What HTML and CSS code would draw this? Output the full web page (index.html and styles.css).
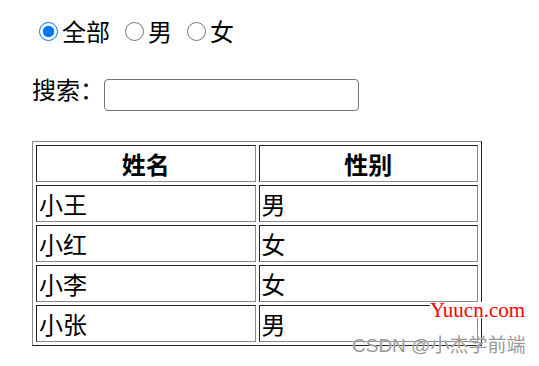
FILE: index.html
```html
<!DOCTYPE html>
<html lang="zh-CN">
<head>
  <meta charset="UTF-8" />
  <meta name="viewport" content="width=device-width, initial-scale=1.0">
  <title>筛选</title>
  <link rel="stylesheet" href="styles.css">
</head>
<body>
  <div class="page">
    <div class="filter">
      <label class="choice"><input type="radio" name="sex" value="all" checked>全部</label>
      <label class="choice"><input type="radio" name="sex" value="male">男</label>
      <label class="choice"><input type="radio" name="sex" value="female">女</label>
    </div>

    <div class="search">
      <span class="search-label">搜索：</span>
      <input type="text" class="search-input">
    </div>

    <table class="list">
      <thead>
        <tr>
          <th>姓名</th>
          <th>性别</th>
        </tr>
      </thead>
      <tbody>
        <tr><td>小王</td><td>男</td></tr>
        <tr><td>小红</td><td>女</td></tr>
        <tr><td>小李</td><td>女</td></tr>
        <tr><td>小张</td><td>男</td></tr>
      </tbody>
    </table>

    <span class="mark-site">Yuucn.com</span>
    <span class="mark-author">CSDN @小杰学前端</span>
  </div>
</body>
</html>
```

FILE: styles.css
```css
:root {
  --text-color: #000;
  --line-dark: #222;
  --line-light: #8a8a8a;
}

body {
  margin: 0;
  font-family: "Noto Sans CJK SC", "Liberation Sans", sans-serif;
  font-size: 24px;
  color: var(--text-color);
  background: #fff;
}

.page {
  position: relative;
  padding: 15px 0 0 32px;
  min-height: 351px;
}

.filter {
  display: flex;
  align-items: center;
  height: 32px;
  line-height: 32px;
}

.choice {
  display: inline-flex;
  align-items: center;
}

.choice + .choice {
  margin-left: 8px;
}

.choice input {
  width: 19px;
  height: 19px;
  margin: 0 4px 0 7px;
}

.search {
  display: flex;
  align-items: flex-start;
  margin-top: 26px;
}

.search-label {
  line-height: 32px;
}

.search-input {
  width: 255px;
  height: 32px;
  margin-top: 6px;
  box-sizing: border-box;
  border: 1px solid #767676;
  border-radius: 4px;
  font-size: 20px;
}

.list {
  margin-top: 30px;
  width: 450px;
  border-collapse: separate;
  border-spacing: 3px;
  border: 1px solid;
  border-color: var(--line-light) var(--line-dark) var(--line-dark) var(--line-light);
}

.list th,
.list td {
  width: 50%;
  padding: 1px 2px;
  line-height: 33px;
  border: 1px solid;
  border-color: var(--line-dark) var(--line-light) var(--line-light) var(--line-dark);
}

.list th {
  font-weight: bold;
  text-align: center;
}

.list td {
  text-align: left;
}

.mark-site {
  position: absolute;
  left: 430px;
  top: 302px;
  font-family: "Liberation Serif", serif;
  font-size: 21px;
  line-height: 16px;
  color: #ff0000;
  background: #fff;
}

.mark-author {
  position: absolute;
  left: 352px;
  top: 336px;
  font-family: "Liberation Sans", "Noto Sans CJK SC", sans-serif;
  font-size: 19px;
  line-height: 20px;
  color: #999;
  text-shadow: 0 0 1px #fff;
  white-space: nowrap;
}
```
